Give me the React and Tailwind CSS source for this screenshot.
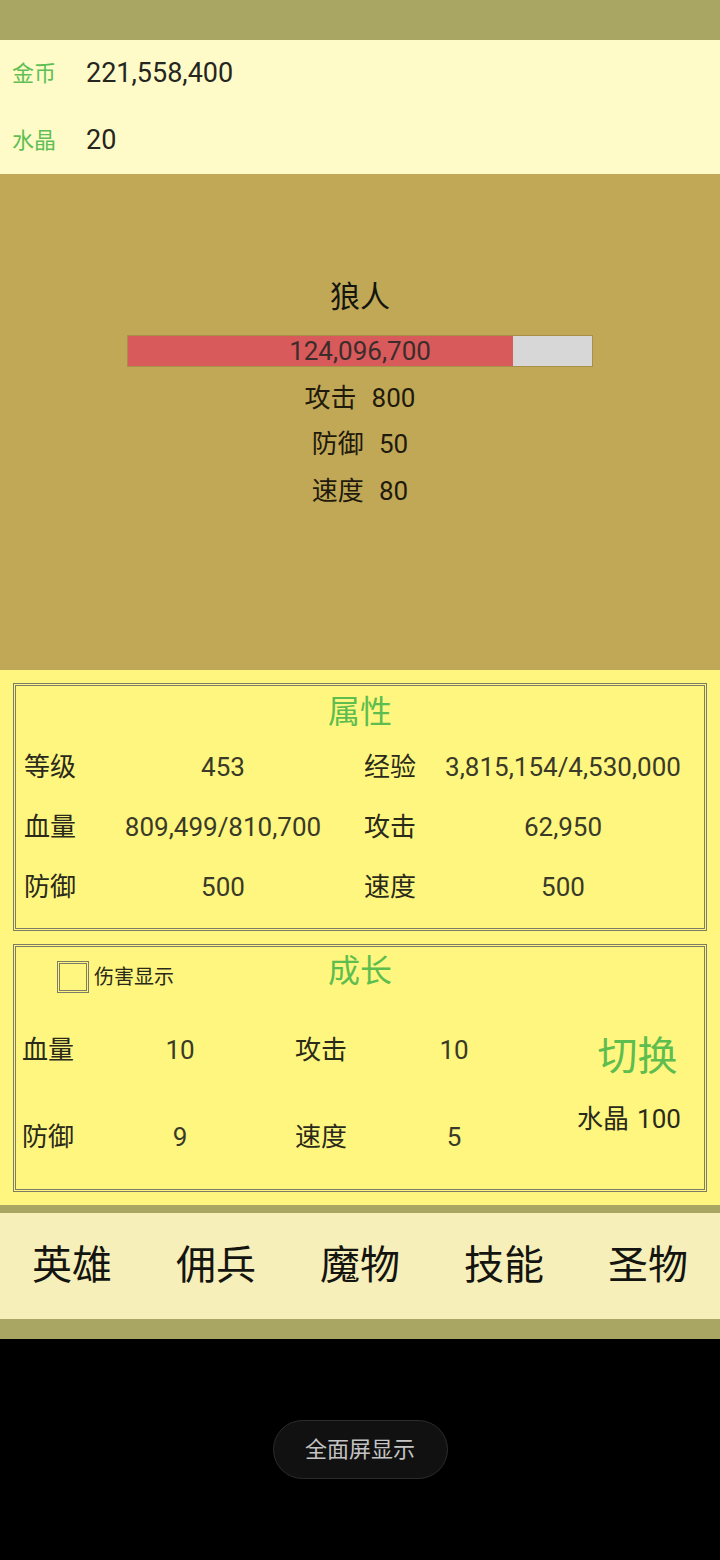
import React from "react";

const F = { fontFamily: 'Roboto, "Noto Sans CJK SC", sans-serif' };

function Row4({ a, b, c, d }) {
  return (
    <div className="flex h-[60px] items-center text-[26px] text-[#2a2a1a]">
      <div className="w-[88px] pl-[8px]">{a}</div>
      <div className="w-[238px] text-center text-[#3a3a28]">{b}</div>
      <div className="w-[80px] pl-[22px]">{c}</div>
      <div className="flex-1 text-center text-[#3a3a28]">{d}</div>
    </div>
  );
}

function GRow({ a, b, c, d }) {
  return (
    <div className="flex h-[87px] items-center text-[26px] text-[#2a2a1a]">
      <div className="w-[110px] pl-[6px]">{a}</div>
      <div className="w-[108px] text-center text-[#3a3a28]">{b}</div>
      <div className="w-[120px] pl-[61px]">{c}</div>
      <div className="w-[200px] text-center text-[#3a3a28]">{d}</div>
    </div>
  );
}

export default function App() {
  return (
    <div className="w-[720px] h-[1560px] bg-black flex flex-col" style={F}>
      <div className="h-[40px] bg-[#a9a562]" />
      <div className="h-[134px] bg-[#fffbc8] flex flex-col">
        <div className="h-[67px] flex items-center">
          <span className="w-[86px] pl-[12px] text-[22px] text-[#5fbf55]">金币</span>
          <span className="text-[27px] text-[#262620]">221,558,400</span>
        </div>
        <div className="h-[67px] flex items-center">
          <span className="w-[86px] pl-[12px] text-[22px] text-[#5fbf55]">水晶</span>
          <span className="text-[27px] text-[#262620]">20</span>
        </div>
      </div>
      <div className="h-[496px] bg-[#c1a856] flex flex-col items-center pt-[103px]">
        <div className="h-[40px] leading-[40px] text-[30px] text-[#151510]">狼人</div>
        <div className="mt-[18px] w-[466px] h-[32px] border border-[#a8904a] bg-[#d7d7d7] relative flex">
          <div className="w-[385px] h-full bg-[#d95a5a]" />
          <div className="absolute inset-0 flex items-center justify-center text-[26px] text-[#3d2c2c]">
            124,096,700
          </div>
        </div>
        <div className="mt-[8px] flex flex-col items-center text-[26px] text-[#1f1a0c]">
          <div className="h-[46.5px] flex items-center gap-[15px]"><span>攻击</span><span>800</span></div>
          <div className="h-[46.5px] flex items-center gap-[15px]"><span>防御</span><span>50</span></div>
          <div className="h-[46.5px] flex items-center gap-[15px]"><span>速度</span><span>80</span></div>
        </div>
      </div>
      <div className="h-[535px] bg-[#fff67f] px-[13px] pt-[13px] flex flex-col gap-[13px]">
        <div className="h-[248px] border-[3px] border-double border-[#7c7c68] flex flex-col">
          <div className="h-[51px] flex items-center justify-center text-[32px] text-[#5dbd4f]">属性</div>
          <Row4 a="等级" b="453" c="经验" d="3,815,154/4,530,000" />
          <Row4 a="血量" b="809,499/810,700" c="攻击" d="62,950" />
          <Row4 a="防御" b="500" c="速度" d="500" />
        </div>
        <div className="h-[248px] border-[3px] border-double border-[#7c7c68] flex flex-col">
          <div className="h-[48px] grid grid-cols-3">
            <div className="flex items-start pl-[41px] pt-[14px]">
              <div className="w-[32px] h-[32px] border-[3px] border-double border-[#7c7c68] bg-[#fff67f]" />
              <span className="ml-[5px] mt-[4px] text-[20px] leading-[24px] text-[#2a2a1a]">伤害显示</span>
            </div>
            <div className="flex items-center justify-center text-[32px] text-[#5dbd4f]">成长</div>
            <div />
          </div>
          <div className="mt-[12px] flex">
            <div className="flex flex-col">
              <GRow a="血量" b="10" c="攻击" d="10" />
              <GRow a="防御" b="9" c="速度" d="5" />
            </div>
            <div className="flex-1 flex flex-col items-center pt-[20px]">
              <div className="h-[60px] flex items-center pl-[17px] text-[40px] text-[#5dbd4f]">切换</div>
              <div className="mt-[15px] h-[34px] flex items-center gap-[8px] text-[26px] text-[#2a2a1a]">
                <span>水晶</span><span>100</span>
              </div>
            </div>
          </div>
        </div>
      </div>
      <div className="h-[8px] bg-[#a9a562]" />
      <div className="h-[106px] bg-[#f6efb9] grid grid-cols-5 items-center text-[40px] text-[#141410]">
        <div className="text-center">英雄</div>
        <div className="text-center">佣兵</div>
        <div className="text-center">魔物</div>
        <div className="text-center">技能</div>
        <div className="text-center">圣物</div>
      </div>
      <div className="h-[20px] bg-[#a9a562]" />
      <div className="flex-1 bg-black flex justify-center pt-[81px]">
        <div className="w-[175px] h-[59px] rounded-full bg-[#111111] border border-[#2c2c2c] flex items-center justify-center text-[22px] text-[#c4c4c4]">
          全面屏显示
        </div>
      </div>
    </div>
  );
}
